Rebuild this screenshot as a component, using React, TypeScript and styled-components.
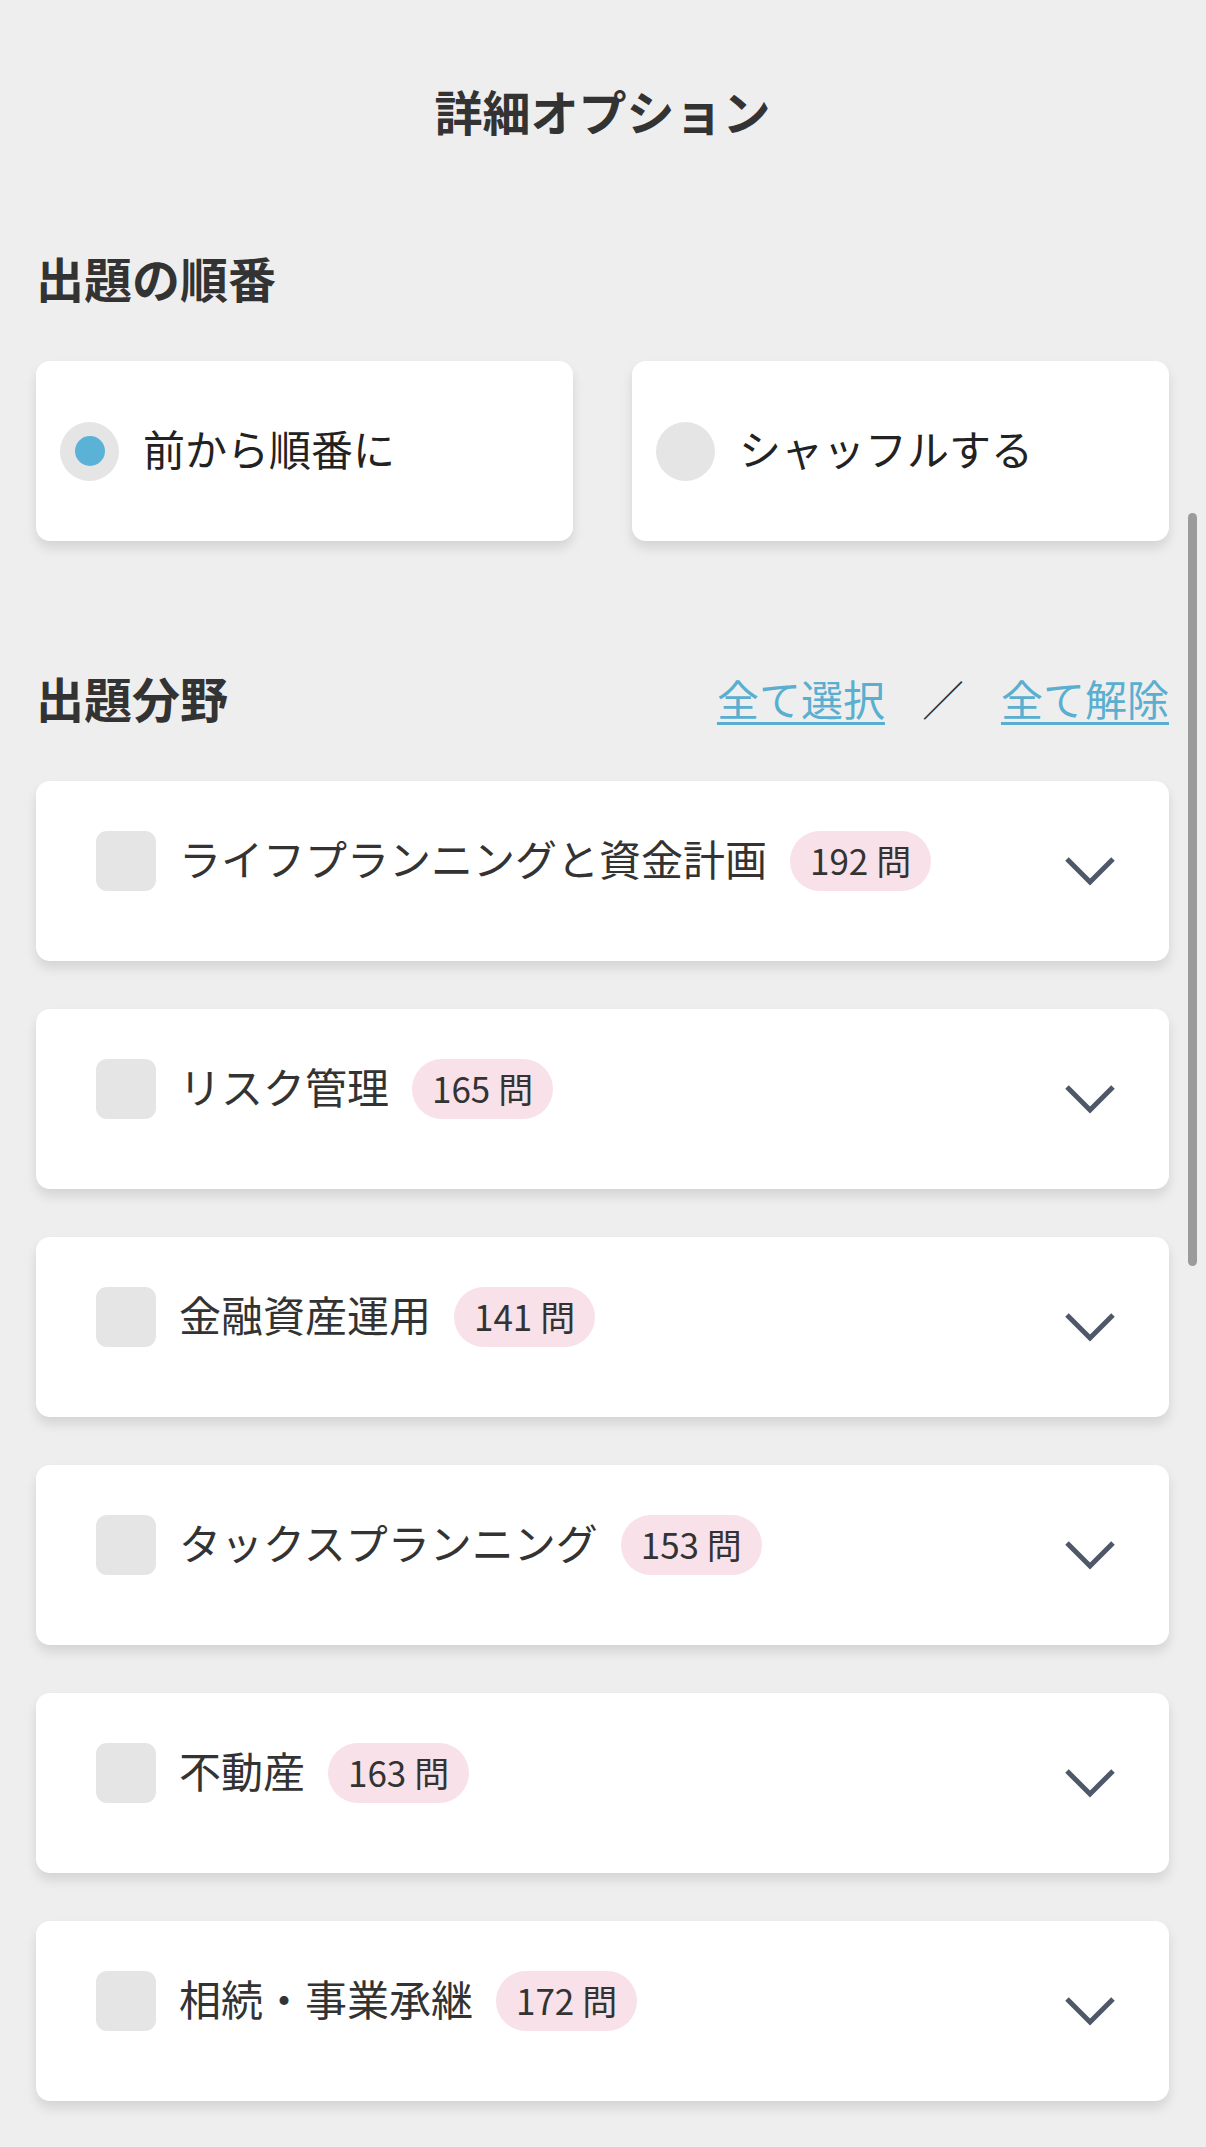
import React from "react";
import styled, { createGlobalStyle } from "styled-components";

const GlobalStyle = createGlobalStyle`
  html, body {
    margin: 0;
    padding: 0;
    background: #eeeeee;
  }
  body {
    font-family: "Noto Sans CJK JP", "Noto Sans", sans-serif;
    color: #333333;
  }
  * { box-sizing: border-box; }
`;

const Page = styled.div`
  width: 1206px;
  min-height: 2147px;
  padding: 83px 37px 46px 36px;
  background: #eeeeee;
`;

const Title = styled.h1`
  margin: 0;
  height: 60px;
  line-height: 54px;
  font-size: 48px;
  font-weight: 700;
  text-align: center;
  color: #333333;
`;

const SectionHeader = styled.div<{ $top: number }>`
  display: flex;
  align-items: flex-start;
  justify-content: space-between;
  height: 60px;
  margin-top: ${(p) => p.$top}px;
  margin-bottom: 50px;
`;

const SectionTitle = styled.h2`
  margin: 0;
  font-size: 48px;
  line-height: 52px;
  font-weight: 700;
  color: #333333;
`;

const Links = styled.div`
  display: flex;
  align-items: center;
  gap: 37px;
  font-size: 42px;
  line-height: 54px;
`;

const LinkText = styled.a`
  color: #5aaed0;
  text-decoration: underline;
  text-decoration-thickness: 3px;
  text-underline-offset: 6px;
  cursor: pointer;
`;

const Slash = styled.span`
  color: #333333;
  font-weight: 300;
`;

const RadioGrid = styled.div`
  display: grid;
  grid-template-columns: 1fr 1fr;
  gap: 59px;
`;

const RadioCard = styled.label`
  display: flex;
  align-items: center;
  gap: 24px;
  height: 180px;
  padding: 0 24px;
  background: #ffffff;
  border-radius: 14px;
  box-shadow: 0 7px 12px rgba(0, 0, 0, 0.11);
  cursor: pointer;
`;

const RadioLabel = styled.span`
  font-size: 42px;
  line-height: 60px;
  padding-bottom: 7px;
  color: #222222;
`;

const RadioCircle = styled.span<{ $checked: boolean }>`
  flex: none;
  width: 59px;
  height: 59px;
  border-radius: 50%;
  background: #e5e5e5;
  display: flex;
  align-items: center;
  justify-content: center;
  &::after {
    content: "";
    display: ${(p) => (p.$checked ? "block" : "none")};
    width: 30px;
    height: 30px;
    border-radius: 50%;
    background: #5ab3d7;
  }
`;

const CategoryList = styled.div`
  display: flex;
  flex-direction: column;
  gap: 48px;
`;

const CategoryCard = styled.div`
  display: flex;
  align-items: center;
  justify-content: space-between;
  height: 180px;
  padding: 0 52px 0 60px;
  background: #ffffff;
  border-radius: 14px;
  box-shadow: 0 7px 12px rgba(0, 0, 0, 0.11);
`;

const CategoryMain = styled.div`
  display: flex;
  align-items: center;
  margin-bottom: 20px;
`;

const Checkbox = styled.span`
  flex: none;
  width: 60px;
  height: 60px;
  border-radius: 11px;
  background: #e5e5e5;
  margin-right: 23px;
`;

const CategoryName = styled.span`
  font-size: 42px;
  line-height: 60px;
  padding-bottom: 7px;
  color: #333333;
  margin-right: 23px;
`;

const Badge = styled.span`
  display: inline-flex;
  align-items: center;
  height: 60px;
  padding: 0 20px 4px;
  border-radius: 30px;
  background: #f8e1e8;
  font-size: 35px;
  color: #333333;
`;

const Chevron = styled.svg`
  flex: none;
  width: 54px;
  height: 34px;
`;

const ScrollThumb = styled.div`
  position: fixed;
  left: 1188px;
  top: 513px;
  width: 9px;
  height: 753px;
  border-radius: 5px;
  background: #9b9b9b;
`;

const categories = [
  { name: "ライフプランニングと資金計画", count: 192 },
  { name: "リスク管理", count: 165 },
  { name: "金融資産運用", count: 141 },
  { name: "タックスプランニング", count: 153 },
  { name: "不動産", count: 163 },
  { name: "相続・事業承継", count: 172 },
];

export default function App() {
  return (
    <>
      <GlobalStyle />
      <Page>
        <Title>詳細オプション</Title>

        <SectionHeader $top={108}>
          <SectionTitle>出題の順番</SectionTitle>
        </SectionHeader>
        <RadioGrid>
          <RadioCard>
            <RadioCircle $checked={true} />
            <RadioLabel>前から順番に</RadioLabel>
          </RadioCard>
          <RadioCard>
            <RadioCircle $checked={false} />
            <RadioLabel>シャッフルする</RadioLabel>
          </RadioCard>
        </RadioGrid>

        <SectionHeader $top={130}>
          <SectionTitle>出題分野</SectionTitle>
          <Links>
            <LinkText>全て選択</LinkText>
            <Slash>／</Slash>
            <LinkText>全て解除</LinkText>
          </Links>
        </SectionHeader>

        <CategoryList>
          {categories.map((c) => (
            <CategoryCard key={c.name}>
              <CategoryMain>
                <Checkbox />
                <CategoryName>{c.name}</CategoryName>
                <Badge>{c.count} 問</Badge>
              </CategoryMain>
              <Chevron viewBox="0 0 54 34">
                <polyline
                  points="4,5 27,28 50,5"
                  fill="none"
                  stroke="#4f5869"
                  strokeWidth="5"
                  strokeLinecap="butt"
                  strokeLinejoin="miter"
                />
              </Chevron>
            </CategoryCard>
          ))}
        </CategoryList>
      </Page>
      <ScrollThumb />
    </>
  );
}
